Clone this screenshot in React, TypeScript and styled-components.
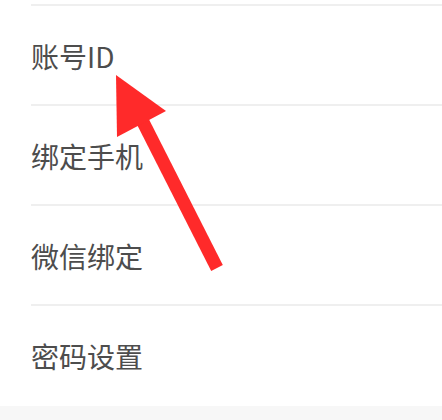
import React from 'react'
import styled, { createGlobalStyle } from 'styled-components'

const GlobalStyle = createGlobalStyle`
  html, body {
    margin: 0;
    padding: 0;
    background: #ffffff;
  }
  body {
    font-family: "Noto Sans CJK SC", "Noto Sans", sans-serif;
  }
`

const Page = styled.div`
  position: relative;
  width: 442px;
  height: 420px;
  overflow: hidden;
  background: #ffffff;
  display: flex;
  flex-direction: column;
  padding-top: 4px;
  box-sizing: border-box;
`

const List = styled.ul`
  list-style: none;
  margin: 0;
  padding: 0 0 0 31px;
  display: flex;
  flex-direction: column;
`

const Row = styled.li`
  height: 98px;
  border-top: 2px solid #efefef;
  display: flex;
  align-items: center;
  cursor: pointer;
`

const Label = styled.span`
  font-size: 28px;
  line-height: 1;
  color: #4d4d4d;
  margin-top: 2px;
`

const Footer = styled.div`
  flex: 1;
  margin-top: 2px;
  background: #f7f7f7;
`

const Arrow = styled.svg`
  position: absolute;
  left: 0;
  top: 0;
  pointer-events: none;
`

const items = ['账号ID', '绑定手机', '微信绑定', '密码设置']

export default function App() {
  return (
    <>
      <GlobalStyle />
      <Page>
        <List>
          {items.map((label) => (
            <Row key={label}>
              <Label>{label}</Label>
            </Row>
          ))}
        </List>
        <Footer />
        <Arrow width="442" height="420" viewBox="0 0 442 420">
          <line x1="217" y1="268" x2="143" y2="122" stroke="#ff2a2a" strokeWidth="13" />
          <polygon points="116,75 166,111 117,137" fill="#ff2a2a" />
        </Arrow>
      </Page>
    </>
  )
}
